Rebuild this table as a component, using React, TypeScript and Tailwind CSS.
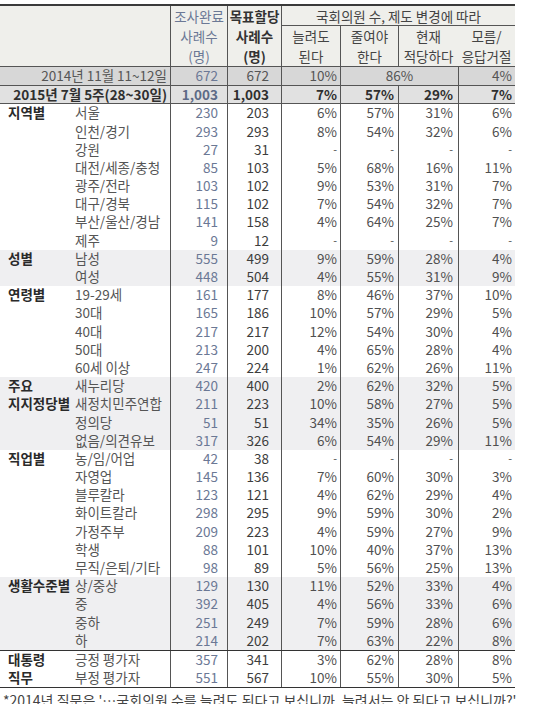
import React from "react";

type Row = { name: string; n: string; t: string; v: string[] };
type Group = { label: string[]; shaded?: boolean; topRule?: boolean; rows: Row[] };

const dash = ["-", "-", "-", "-"];

const groups: Group[] = [
  {
    label: ["지역별"],
    rows: [
      { name: "서울", n: "230", t: "203", v: ["6%", "57%", "31%", "6%"] },
      { name: "인천/경기", n: "293", t: "293", v: ["8%", "54%", "32%", "6%"] },
      { name: "강원", n: "27", t: "31", v: dash },
      { name: "대전/세종/충청", n: "85", t: "103", v: ["5%", "68%", "16%", "11%"] },
      { name: "광주/전라", n: "103", t: "102", v: ["9%", "53%", "31%", "7%"] },
      { name: "대구/경북", n: "115", t: "102", v: ["7%", "54%", "32%", "7%"] },
      { name: "부산/울산/경남", n: "141", t: "158", v: ["4%", "64%", "25%", "7%"] },
      { name: "제주", n: "9", t: "12", v: dash },
    ],
  },
  {
    label: ["성별"],
    shaded: true,
    rows: [
      { name: "남성", n: "555", t: "499", v: ["9%", "59%", "28%", "4%"] },
      { name: "여성", n: "448", t: "504", v: ["4%", "55%", "31%", "9%"] },
    ],
  },
  {
    label: ["연령별"],
    rows: [
      { name: "19-29세", n: "161", t: "177", v: ["8%", "46%", "37%", "10%"] },
      { name: "30대", n: "165", t: "186", v: ["10%", "57%", "29%", "5%"] },
      { name: "40대", n: "217", t: "217", v: ["12%", "54%", "30%", "4%"] },
      { name: "50대", n: "213", t: "200", v: ["4%", "65%", "28%", "4%"] },
      { name: "60세 이상", n: "247", t: "224", v: ["1%", "62%", "26%", "11%"] },
    ],
  },
  {
    label: ["주요", "지지정당별"],
    shaded: true,
    rows: [
      { name: "새누리당", n: "420", t: "400", v: ["2%", "62%", "32%", "5%"] },
      { name: "새정치민주연합", n: "211", t: "223", v: ["10%", "58%", "27%", "5%"] },
      { name: "정의당", n: "51", t: "51", v: ["34%", "35%", "26%", "5%"] },
      { name: "없음/의견유보", n: "317", t: "326", v: ["6%", "54%", "29%", "11%"] },
    ],
  },
  {
    label: ["직업별"],
    rows: [
      { name: "농/임/어업", n: "42", t: "38", v: dash },
      { name: "자영업", n: "145", t: "136", v: ["7%", "60%", "30%", "3%"] },
      { name: "블루칼라", n: "123", t: "121", v: ["4%", "62%", "29%", "4%"] },
      { name: "화이트칼라", n: "298", t: "295", v: ["9%", "59%", "30%", "2%"] },
      { name: "가정주부", n: "209", t: "223", v: ["4%", "59%", "27%", "9%"] },
      { name: "학생", n: "88", t: "101", v: ["10%", "40%", "37%", "13%"] },
      { name: "무직/은퇴/기타", n: "98", t: "89", v: ["5%", "56%", "25%", "13%"] },
    ],
  },
  {
    label: ["생활수준별"],
    shaded: true,
    rows: [
      { name: "상/중상", n: "129", t: "130", v: ["11%", "52%", "33%", "4%"] },
      { name: "중", n: "392", t: "405", v: ["4%", "56%", "33%", "6%"] },
      { name: "중하", n: "251", t: "249", v: ["7%", "59%", "28%", "6%"] },
      { name: "하", n: "214", t: "202", v: ["7%", "63%", "22%", "8%"] },
    ],
  },
  {
    label: ["대통령", "직무"],
    topRule: true,
    rows: [
      { name: "긍정 평가자", n: "357", t: "341", v: ["3%", "62%", "28%", "8%"] },
      { name: "부정 평가자", n: "551", t: "567", v: ["10%", "55%", "30%", "5%"] },
    ],
  },
];

const rowGrid = "grid grid-cols-[75px_95px_57px_54px_59px_58px_60px_57px] h-[18.2px] items-center leading-none";
const pctPad = ["pr-[3px]", "pr-[4px]", "pr-[5px]", "pr-[3px]"];

function Header() {
  return (
    <div className="grid grid-cols-[170px_57px_54px_59px_58px_60px_57px] grid-rows-[20px_40px] bg-[#efefeb] border-t-2 border-[#3a3a3a] text-[13.5px] leading-[20px]">
      <div className="row-span-2" />
      <div className="row-span-2 border-l border-[#555] flex flex-col items-center justify-center text-[#6b7895]">
        <span>조사완료</span>
        <span>사례수</span>
        <span>(명)</span>
      </div>
      <div className="row-span-2 border-l border-[#555] flex flex-col items-center justify-center text-[#333] font-semibold">
        <span>목표할당</span>
        <span>사례수</span>
        <span>(명)</span>
      </div>
      <div className="col-span-4 border-l border-b border-[#555] flex items-center justify-center text-[#444]">
        국회의원 수, 제도 변경에 따라
      </div>
      {[
        ["늘려도", "된다"],
        ["줄여야", "한다"],
        ["현재", "적당하다"],
        ["모름/", "응답거절"],
      ].map((l, i) => (
        <div
          key={i}
          className={`flex flex-col items-center justify-center text-[#444] ${i < 3 ? "border-l border-[#555]" : ""}`}
        >
          <span>{l[0]}</span>
          <span>{l[1]}</span>
        </div>
      ))}
    </div>
  );
}

function SummaryRows() {
  return (
    <>
      <div className="grid grid-cols-[170px_57px_54px_59px_118px_57px] h-[19px] items-center leading-none bg-[#d7d7d7] border-t border-[#555] text-[#555]">
        <div className="text-right pr-[3px]">2014년 11월 11~12일</div>
        <div className="border-l border-[#555] h-full flex items-center justify-end pr-[9px] text-[#6b7895]">672</div>
        <div className="border-l border-[#555] h-full flex items-center justify-end pr-[12px]">672</div>
        <div className="border-l border-[#555] h-full flex items-center justify-end pr-[3px]">10%</div>
        <div className="border-l border-[#555] h-full flex items-center justify-center">86%</div>
        <div className="border-l border-[#555] h-full flex items-center justify-end pr-[3px]">4%</div>
      </div>
      <div className="grid grid-cols-[170px_57px_54px_59px_58px_60px_57px] h-[19px] items-center leading-none bg-[#e1e1e1] border-y border-[#555] text-[#2f2f2f] font-semibold">
        <div className="text-right pr-[3px]">2015년 7월 5주(28~30일)</div>
        <div className="border-l border-[#555] h-full flex items-center justify-end pr-[9px] text-[#5d6a86]">1,003</div>
        <div className="border-l border-[#555] h-full flex items-center justify-end pr-[12px]">1,003</div>
        {["7%", "57%", "29%", "7%"].map((p, i) => (
          <div key={i} className={`border-l border-[#555] h-full flex items-center justify-end ${pctPad[i]}`}>
            {p}
          </div>
        ))}
      </div>
    </>
  );
}

function GroupBlock({ g }: { g: Group }) {
  return (
    <div className={`${g.shaded ? "bg-[#efeff1]" : ""} ${g.topRule ? "border-t-[1.5px] border-[#333]" : ""}`}>
      {g.rows.map((r, i) => (
        <div key={r.name} className={rowGrid}>
          <div className="pl-[8px] font-bold text-[#2a2a2a] whitespace-nowrap">{g.label[i] ?? ""}</div>
          <div className="text-[#555] whitespace-nowrap">{r.name}</div>
          <div className="border-l border-[#555] h-full flex items-center justify-end pr-[9px] text-[#6b7895]">{r.n}</div>
          <div className="border-l border-[#555] h-full flex items-center justify-end pr-[12px] text-[#3d3d3d]">{r.t}</div>
          {r.v.map((p, k) => (
            <div
              key={k}
              className={`h-full flex items-center justify-end ${pctPad[k]} text-[#505050] border-l border-[#555] ${p === "-" ? "text-[11px]" : ""}`}
            >
              {p}
            </div>
          ))}
        </div>
      ))}
    </div>
  );
}

export default function App() {
  return (
    <div
      className="w-[550px] h-[704px] overflow-hidden bg-white pt-[4px] text-[13.5px]"
      style={{ fontFamily: '"Noto Sans CJK KR", "Noto Sans", sans-serif' }}
    >
      <div className="w-[515px]">
        <Header />
        <SummaryRows />
        {groups.map((g) => (
          <GroupBlock key={g.label.join("")} g={g} />
        ))}
        <div className="border-t-[1.5px] border-[#333]" />
      </div>
      <div className="pl-[3px] pt-[2px] text-[14px] leading-[20px] text-[#444] whitespace-nowrap">
        *2014년 질문은 '…국회의원 수를 늘려도 된다고 보십니까, 늘려서는 안 된다고 보십니까?'
      </div>
    </div>
  );
}
